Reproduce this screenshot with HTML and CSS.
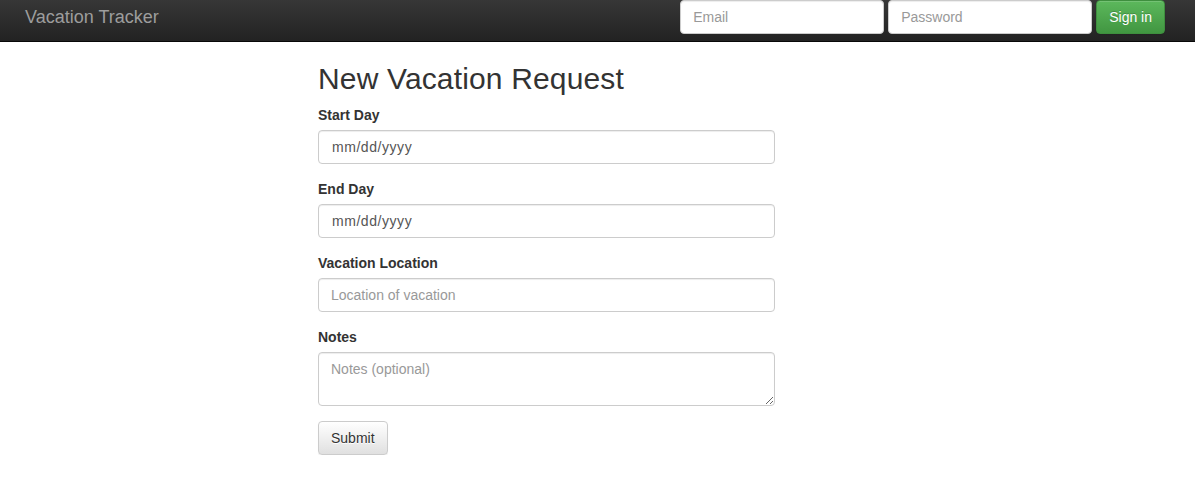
FILE: index.html
```html
<!DOCTYPE html>
<html lang="en">
<head>
<meta charset="utf-8">
<title>Vacation Tracker</title>
<link rel="stylesheet" href="styles.css">
</head>
<body>
<nav class="navbar">
  <a class="brand" href="#">Vacation Tracker</a>
  <form class="signin">
    <input class="nav-input" type="text" placeholder="Email">
    <input class="nav-input" type="password" placeholder="Password">
    <button class="btn btn-success" type="button">Sign in</button>
  </form>
</nav>
<main class="content">
  <h2 class="title">New Vacation Request</h2>
  <form class="request">
    <div class="form-group">
      <label class="label">Start Day</label>
      <input class="control date" type="text" placeholder="mm/dd/yyyy">
    </div>
    <div class="form-group">
      <label class="label">End Day</label>
      <input class="control date" type="text" placeholder="mm/dd/yyyy">
    </div>
    <div class="form-group">
      <label class="label">Vacation Location</label>
      <input class="control" type="text" placeholder="Location of vacation">
    </div>
    <div class="form-group">
      <label class="label">Notes</label>
      <textarea class="control notes" rows="2" placeholder="Notes (optional)"></textarea>
    </div>
    <button class="btn btn-default" type="button">Submit</button>
  </form>
</main>
</body>
</html>
```

FILE: styles.css
```css
* { box-sizing: border-box; }
html, body { margin: 0; padding: 0; }
body {
  font-family: "Liberation Sans", Arial, sans-serif;
  font-size: 14px;
  line-height: 1.42857143;
  color: #333;
  background: #fff;
}
.navbar {
  height: 42px;
  display: flex;
  justify-content: space-between;
  align-items: flex-start;
  background: linear-gradient(to bottom, #373737 0, #222 100%);
  border-bottom: 1px solid #080808;
  padding: 0 30px 0 25px;
}
.brand {
  font-size: 18px;
  line-height: 20px;
  color: #9d9d9d;
  text-decoration: none;
  padding-top: 7px;
}
.signin {
  display: flex;
  gap: 4px;
  margin: 0;
  padding-top: 0;
}
.nav-input, .control {
  font-family: inherit;
  font-size: 14px;
  line-height: 1.42857143;
  color: #555;
  background: #fff;
  border: 1px solid #ccc;
  border-radius: 4px;
  box-shadow: inset 0 1px 1px rgba(0,0,0,.075);
  padding: 6px 12px;
  height: 34px;
  outline: none;
}
.nav-input { width: 204px; }
.nav-input::placeholder, .control::placeholder { color: #999; opacity: 1; }
.control.date::placeholder { color: #555; letter-spacing: 0.55px; }
.control.date { padding-left: 13px; }
.btn {
  font-family: inherit;
  font-size: 14px;
  line-height: 1.42857143;
  padding: 6px 12px;
  height: 34px;
  border-radius: 4px;
  border: 1px solid transparent;
  cursor: pointer;
}
.btn-success {
  color: #fff;
  background: linear-gradient(to bottom, #5cb85c 0, #419641 100%);
  border-color: #3e8f3e;
  text-shadow: 0 -1px 0 rgba(0,0,0,.2);
  box-shadow: inset 0 1px 0 rgba(255,255,255,.15), 0 1px 1px rgba(0,0,0,.075);
}
.btn-default {
  color: #333;
  background: linear-gradient(to bottom, #fff 0, #e0e0e0 100%);
  border-color: #ccc;
  text-shadow: 0 1px 0 #fff;
  box-shadow: inset 0 1px 0 rgba(255,255,255,.15), 0 1px 1px rgba(0,0,0,.075);
}
.content {
  width: 457px;
  margin-left: 318px;
}
.title {
  font-size: 30px;
  font-weight: 500;
  line-height: 1.1;
  letter-spacing: 0.15px;
  margin: 20px 0 10px;
  color: #333;
}
.request { margin: 0; }
.form-group {
  display: flex;
  flex-direction: column;
  align-items: flex-start;
  margin-bottom: 15px;
}
.label {
  font-weight: bold;
  margin-bottom: 5px;
}
.control { width: 100%; display: block; }
.notes { height: 54px; resize: vertical; }
```
